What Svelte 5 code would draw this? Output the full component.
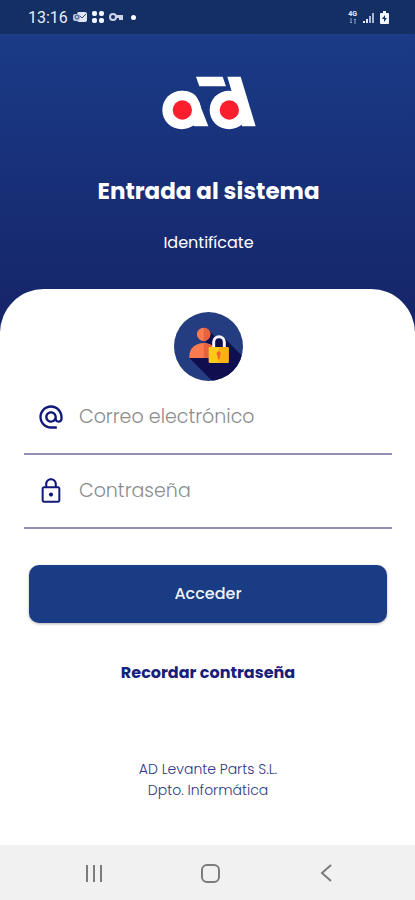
<script lang="ts">
  let email = $state("");
  let password = $state("");

  function handleSubmit(event: SubmitEvent) {
    event.preventDefault();
  }
</script>

<div class="screen">
  <div class="status">
    <div class="status-group">
      <span class="time">13:16</span>
      <svg width="14" height="12" viewBox="0 0 14 12" aria-hidden="true">
        <rect x="4" y="1" width="10" height="10" rx="2" fill="#dfe5f4" />
        <path d="M6 4l3 3 4-4" fill="none" stroke="#37508a" />
        <rect x="0" y="3" width="7" height="7" rx="2" fill="#b9c5df" />
        <circle cx="4" cy="6" r="2" fill="none" stroke="#37508a" />
      </svg>
      <svg width="12" height="12" viewBox="0 0 12 12" fill="#f4f6ff" aria-hidden="true">
        <rect x="0" y="0" width="5" height="5" rx="2" />
        <rect x="7" y="0" width="5" height="5" rx="2" />
        <rect x="0" y="7" width="5" height="5" rx="2" />
        <rect x="7" y="7" width="5" height="5" rx="2" />
      </svg>
      <svg width="15" height="10" viewBox="0 0 15 10" fill="none" stroke="#ccd4e8" stroke-width="2" aria-hidden="true">
        <circle cx="4" cy="5" r="3" />
        <path d="M7 4h7M7 5h7M11 5v3M13 5v3" />
      </svg>
      <span class="dot"></span>
    </div>
    <div class="status-group status-group--right">
      <span class="network">
        <span>4G</span>
        <svg width="8" height="6" viewBox="0 0 8 6" fill="none" stroke="#8fa0c6" aria-hidden="true">
          <path d="M2 0v5M1 4l1 1 1-1M6 6V1M5 2l1-1 1 1" />
        </svg>
      </span>
      <svg width="11" height="11" viewBox="0 0 11 11" aria-hidden="true">
        <path d="M0 11V9h2v2zM3 11V7h2v4z" fill="#e6eaf5" />
        <path d="M6 11V4h2v7zM9 11V1h2v10z" fill="#a9b6d2" />
      </svg>
      <svg width="9" height="13" viewBox="0 0 9 13" aria-hidden="true">
        <path d="M3 0h3v2h2q1 0 1 1v9q0 1-1 1H1q-1 0-1-1V3q0-1 1-1h2z" fill="#f4f6fa" />
        <path d="M5 4L2 8h2v3l3-4H5z" fill="#132f63" />
      </svg>
    </div>
  </div>

  <header class="header">
    <svg class="logo" viewBox="36 32 282 160" role="img" aria-label="AD">
      <g fill="#fff">
        <circle cx="95" cy="133" r="58" />
        <path d="M95 75C120 75 136 84 143 100L175 182H132L95 133z" />
        <circle cx="237" cy="133" r="58" />
        <path d="M232 33H272L317 182H276z" />
        <path d="M138 33H218L228 62H148z" />
      </g>
      <circle cx="97" cy="133" r="29" fill="#fb1f2e" />
      <circle cx="238" cy="133" r="29" fill="#fb1f2e" />
    </svg>
    <h1>Entrada al sistema</h1>
    <p>Identifícate</p>
  </header>

  <main class="card">
    <svg class="avatar" viewBox="0 0 207 207" aria-hidden="true">
      <defs>
        <clipPath id="avatar-clip"><circle cx="103.5" cy="103.5" r="103.5" /></clipPath>
      </defs>
      <g clip-path="url(#avatar-clip)">
        <rect width="207" height="207" fill="#243c80" />
        <path d="M103 54L126 77L150 77L220 147V220H128L46 138L92 108z" fill="#0f0f50" />
        <circle cx="89" cy="67" r="20" fill="#fa7b50" />
        <path d="M89 47a20 20 0 0 1 0 40z" fill="#e7623f" />
        <path d="M46 138V132C46 108 66 93 89 93S130 108 130 132V138z" fill="#fa7b50" />
        <path d="M89 93C112 93 130 108 130 132V138H89z" fill="#e7623f" />
        <path d="M119 108V90a16 16 0 0 1 32 0V108" fill="none" stroke="#f5f3fb" stroke-width="9" />
        <rect x="104" y="105" width="60" height="48" rx="4" fill="#ffc91c" />
        <path d="M134 105H160q4 0 4 4V149q0 4-4 4H134z" fill="#fbb014" />
        <path d="M134 118a7 7 0 0 1 4 12l-2 12h-4l-2-12a7 7 0 0 1 4-12z" fill="#f0622b" />
      </g>
    </svg>

    <form onsubmit={handleSubmit}>
      <div class="field">
        <label for="email" aria-label="Correo electrónico">
          <svg viewBox="0 0 24 24">
            <path
              d="M12 2C6.48 2 2 6.48 2 12s4.48 10 10 10h5v-2h-5c-4.34 0-8-3.66-8-8s3.66-8 8-8 8 3.66 8 8v1.43c0 .79-.71 1.57-1.5 1.57s-1.5-.78-1.5-1.57V12c0-2.76-2.24-5-5-5s-5 2.24-5 5 2.24 5 5 5c1.38 0 2.64-.56 3.54-1.47.65.89 1.77 1.47 2.96 1.47 1.97 0 3.5-1.6 3.5-3.57V12c0-5.52-4.48-10-10-10zm0 13c-1.66 0-3-1.34-3-3s1.34-3 3-3 3 1.34 3 3-1.34 3-3 3z"
            />
          </svg>
        </label>
        <input id="email" type="email" placeholder="Correo electrónico" bind:value={email} />
      </div>

      <div class="field">
        <label for="password" aria-label="Contraseña">
          <svg viewBox="0 0 24 24">
            <path
              d="M18 8h-1V6c0-2.76-2.24-5-5-5S7 3.24 7 6v2H6c-1.1 0-2 .9-2 2v10c0 1.1.9 2 2 2h12c1.1 0 2-.9 2-2V10c0-1.1-.9-2-2-2zM8.8 6c0-1.77 1.43-3.2 3.2-3.2s3.2 1.43 3.2 3.2v2H8.8V6zM18.3 20.3H5.7V9.7h12.6v10.6zM12 16.8c1 0 1.8-.8 1.8-1.8s-.8-1.8-1.8-1.8-1.8.8-1.8 1.8.8 1.8 1.8 1.8z"
            />
          </svg>
        </label>
        <input id="password" type="password" placeholder="Contraseña" bind:value={password} />
      </div>

      <button class="submit" type="submit">Acceder</button>
    </form>

    <a class="remember" href="#recordar">Recordar contraseña</a>

    <footer>
      <p>AD Levante Parts S.L.</p>
      <p>Dpto. Informática</p>
    </footer>
  </main>

  <nav class="navbar">
    <button type="button" aria-label="Recientes">
      <svg width="24" height="24" viewBox="0 0 24 24">
        <path d="M5 4v17M12 4v17M19 4v17" />
      </svg>
    </button>
    <button type="button" aria-label="Inicio">
      <svg width="24" height="24" viewBox="0 0 24 24">
        <rect x="4" y="4" width="17" height="17" rx="5" />
      </svg>
    </button>
    <button type="button" aria-label="Atrás">
      <svg width="24" height="24" viewBox="0 0 24 24">
        <path d="M17 4l-9 8 9 8" />
      </svg>
    </button>
  </nav>
</div>

<style>
  :global(body) {
    margin: 0;
    background: #fff;
  }

  .screen {
    display: flex;
    flex-direction: column;
    min-height: 100vh;
    font-family: Poppins, Inter, sans-serif;
  }

  .status {
    display: flex;
    justify-content: space-between;
    align-items: center;
    height: 34px;
    padding: 0 26px 0 28px;
    background: #132f63;
    color: #e9edf7;
    box-sizing: border-box;
  }

  .status-group {
    display: flex;
    align-items: center;
    gap: 5px;
  }

  .status-group--right {
    gap: 6px;
  }

  .time {
    font-family: Roboto, sans-serif;
    font-size: 16px;
  }

  .dot {
    width: 5px;
    height: 5px;
    margin-left: 2px;
    border-radius: 50%;
    background: #fff;
  }

  .network {
    display: flex;
    flex-direction: column;
    align-items: center;
    font: bold 7px/7px Roboto, sans-serif;
  }

  .header {
    display: flex;
    flex-direction: column;
    align-items: center;
    padding: 42px 24px 76px 26px;
    background: linear-gradient(#1a3b87, #16266b 90%);
    color: #fff;
  }

  .logo {
    width: 94px;
    height: 54px;
  }

  h1 {
    margin: 43px 0 0;
    font-size: 23px;
    line-height: 36px;
    font-weight: 700;
  }

  .header p {
    margin: 22px 0 0;
    font-size: 16px;
    line-height: 24px;
  }

  .card {
    display: flex;
    flex: 1;
    flex-direction: column;
    margin-top: -42px;
    padding: 23px 23px 44px 24px;
    border-radius: 44px 44px 0 0;
    background: #fff;
  }

  .avatar {
    align-self: center;
    width: 69px;
    height: 69px;
  }

  .field {
    display: flex;
    align-items: center;
    gap: 14px;
    height: 74px;
    padding: 0 13px;
    border-bottom: 2px solid #9190b2;
    box-sizing: border-box;
  }

  .field label {
    display: flex;
  }

  .field svg {
    width: 28px;
    height: 28px;
    fill: #10187a;
  }

  .field input {
    flex: 1;
    min-width: 0;
    padding: 0;
    border: 0;
    outline: none;
    background: none;
    color: #16266b;
    font-family: inherit;
    font-size: 19px;
    font-weight: 300;
    line-height: 28px;
  }

  .field input::placeholder {
    color: #8c8c8c;
    opacity: 1;
  }

  form {
    display: flex;
    flex-direction: column;
  }

  .submit {
    height: 58px;
    margin: 36px 5px 0;
    padding: 0 0 2px;
    border: 0;
    border-radius: 10px;
    background: #193c84;
    box-shadow: 0 1px 3px rgba(0, 0, 0, 0.3);
    color: #f1f3fb;
    font-family: inherit;
    font-size: 16px;
    font-weight: 500;
    cursor: pointer;
  }

  .remember {
    align-self: center;
    margin-top: 38px;
    color: #16207b;
    font-size: 16px;
    line-height: 24px;
    font-weight: 700;
    text-decoration: none;
  }

  footer {
    margin-top: auto;
    color: #2c3885;
    font-size: 14px;
    font-weight: 300;
    line-height: 21px;
    text-align: center;
  }

  footer p {
    margin: 0;
  }

  .navbar {
    display: flex;
    justify-content: space-between;
    align-items: center;
    height: 55px;
    padding: 0 77px 0 82px;
    background: #f1f1f1;
  }

  .navbar button {
    display: flex;
    padding: 0;
    border: 0;
    background: none;
    cursor: pointer;
  }

  .navbar svg {
    fill: none;
    stroke: #7c7c7c;
    stroke-width: 2;
  }
</style>
